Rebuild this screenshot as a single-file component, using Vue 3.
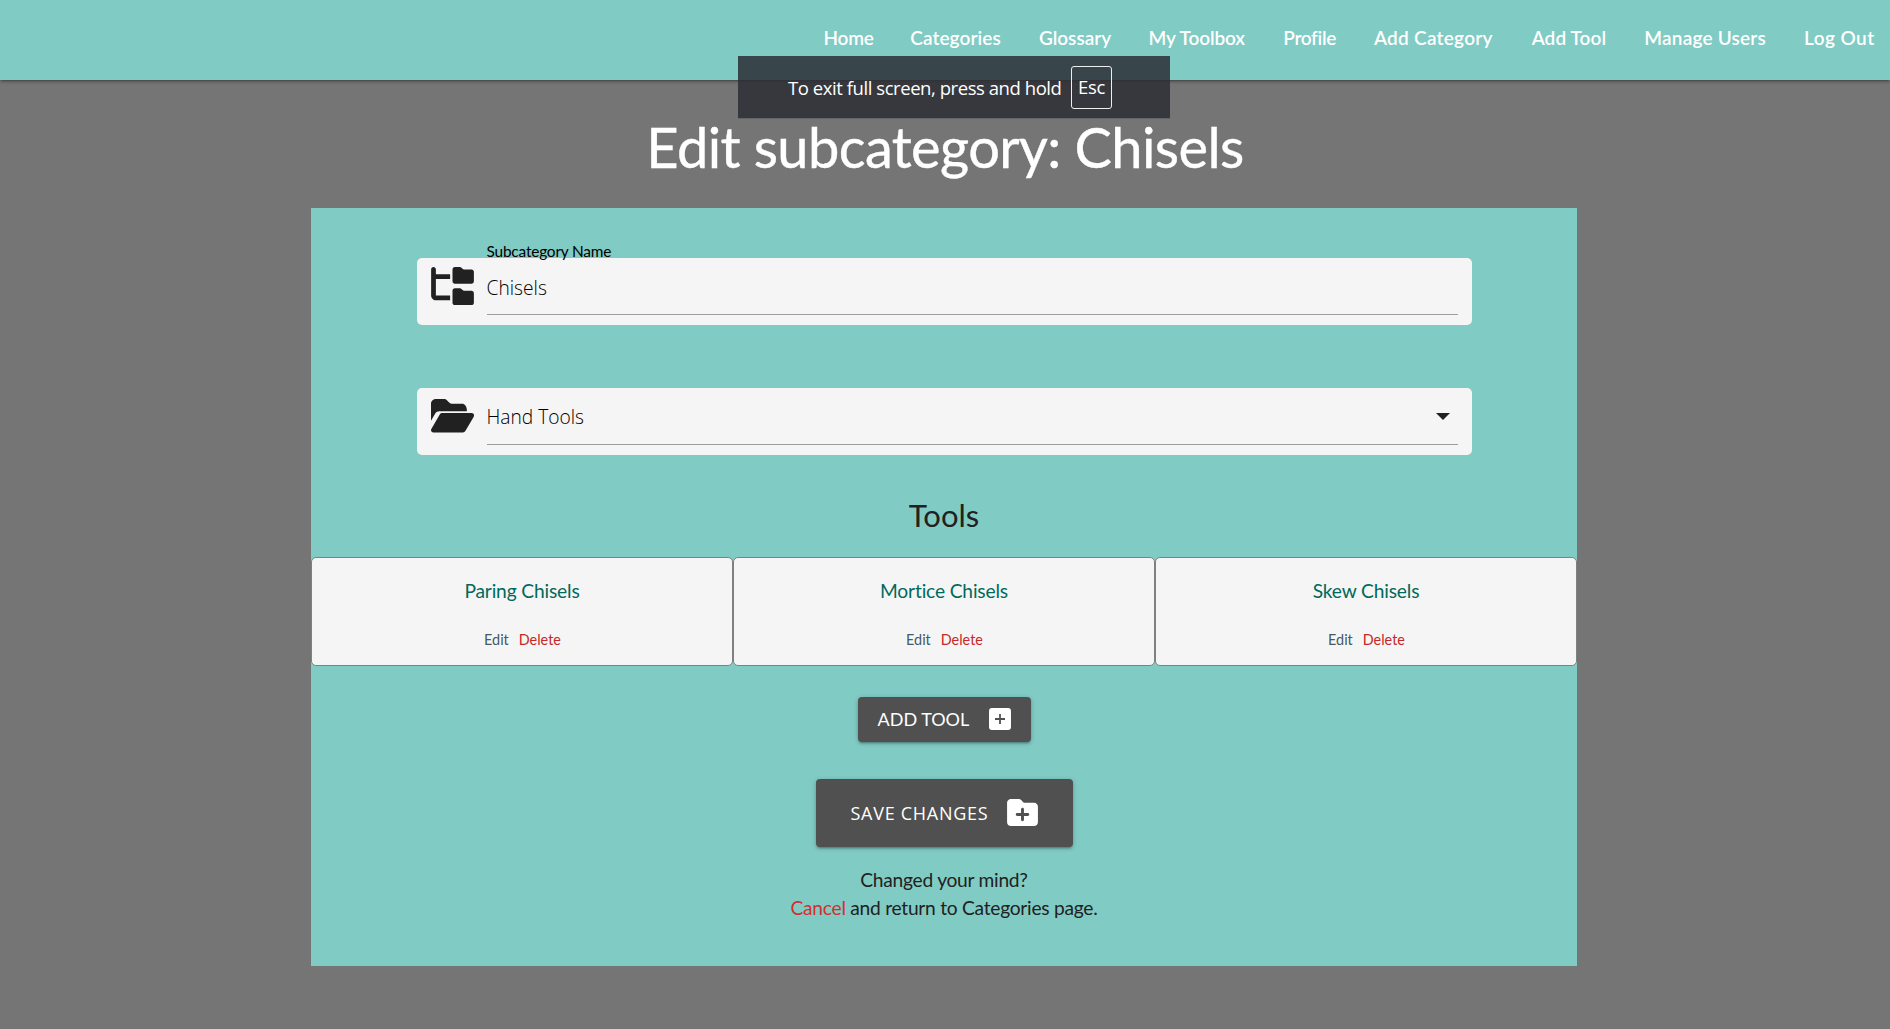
<script setup>
const links = [
  { label: 'Home', width: 49, spacing: -0.2 },
  { label: 'Categories', width: 91, spacing: 0.1 },
  { label: 'Glossary', width: 72, spacing: 0 },
  { label: 'My Toolbox', width: 97, spacing: -0.1 },
  { label: 'Profile', width: 53, spacing: -0.3 },
  { label: 'Add Category', width: 120, spacing: 0.27 },
  { label: 'Add Tool', width: 75, spacing: 0.1 },
  { label: 'Manage Users', width: 122, spacing: 0.2 },
  { label: 'Log Out', width: 72, spacing: 0.45 },
]
const tools = ['Paring Chisels', 'Mortice Chisels', 'Skew Chisels']
</script>

<template>
  <div class="page">
    <nav class="navbar">
      <a v-for="l in links" :key="l.label" :style="{ width: l.width + 'px', letterSpacing: l.spacing + 'px' }">{{ l.label }}</a>
    </nav>
    <div class="fullscreen-hint">
      <span>To exit full screen, press and hold</span>
      <kbd>Esc</kbd>
    </div>
    <h1>Edit subcategory: Chisels</h1>
    <main class="panel">
      <div class="field">
        <svg class="field-icon tree" viewBox="0 0 576 512"><path d="M64 32C64 14.300 49.700 0 32 0S0 14.300 0 32v96V384c0 35.300 28.700 64 64 64H256V384H64V160H256V96H64V32zM288 192c0 17.700 14.300 32 32 32H544c17.700 0 32-14.300 32-32V64c0-17.700-14.300-32-32-32H445.300c-8.500 0-16.600-3.400-22.600-9.400L409.400 9.400c-6-6-14.100-9.400-22.600-9.400H320c-17.700 0-32 14.300-32 32V192zm0 288c0 17.700 14.300 32 32 32H544c17.700 0 32-14.300 32-32V352c0-17.700-14.300-32-32-32H445.300c-8.500 0-16.600-3.400-22.600-9.400l-13.300-13.300c-6-6-14.100-9.400-22.600-9.400H320c-17.700 0-32 14.300-32 32V480z"/></svg>
        <div class="control">
          <label>Subcategory Name</label>
          <span class="value">Chisels</span>
        </div>
      </div>
      <div class="field">
        <svg class="field-icon open" viewBox="0 0 576 448"><path d="M56.600 194.700C68 175 89 163.500 111.800 163.500H480V144c0-44-28-80-64-80H288c-17 0-33.300-6.700-45.300-18.700L216.200 18.700C204.200 6.700 188 0 171 0H64C28.700 0 0 28.700 0 64V292z"/><path d="M572.600 236.100 460 429.100C453.500 441 441 448 428 448H32C7.400 448-8 421.400 4.400 400.100L117 207.100C123.500 195.200 136 188 149 188H545C569.600 188 585 214.800 572.600 236.100z"/></svg>
        <div class="control">
          <span class="value select">Hand Tools</span>
          <svg class="caret" viewBox="0 0 14 7"><path d="M0 0h14L7 7z"/></svg>
        </div>
      </div>
      <h2>Tools</h2>
      <section class="tools">
        <article v-for="t in tools" :key="t">
          <h3>{{ t }}</h3>
          <p><a class="edit">Edit</a><a class="delete">Delete</a></p>
        </article>
      </section>
      <button class="add">
        <span>ADD TOOL</span>
        <svg viewBox="0 0 22 22"><path fill-rule="evenodd" d="M3 0h16a3 3 0 0 1 3 3v16a3 3 0 0 1-3 3H3a3 3 0 0 1-3-3V3a3 3 0 0 1 3-3zM10.100 6v4.100H6v1.800h4.100V16h1.800v-4.100H16v-1.800h-4.100V6z"/></svg>
      </button>
      <button class="save">
        <span>SAVE CHANGES</span>
        <svg viewBox="0 0 512 448"><path fill-rule="evenodd" d="M448 448H64c-35.300 0-64-28.700-64-64V64C0 28.700 28.700 0 64 0h128c20.100 0 39.100 9.500 51.200 25.600l19.200 25.600c6 8.100 15.500 12.800 25.600 12.800H448c35.300 0 64 28.700 64 64V384c0 35.300-28.700 64-64 64zM232 344c0 13.300 10.700 24 24 24s24-10.700 24-24V280h64c13.300 0 24-10.700 24-24s-10.700-24-24-24H280V168c0-13.300-10.700-24-24-24s-24 10.700-24 24v64H168c-13.300 0-24 10.700-24 24s10.700 24 24 24h64v64z"/></svg>
      </button>
      <p class="cancel-note">Changed your mind?<br><a>Cancel</a> and return to Categories page.</p>
    </main>
  </div>
</template>

<style>
body { background: #757575; overflow: hidden; }
</style>

<style scoped>
* { box-sizing: border-box; }
.page {
  width: 1890px;
  height: 1029px;
  overflow: hidden;
  background: #757575;
  color: #212121;
  font-family: Lato, "Liberation Sans", sans-serif;
}
.navbar {
  height: 80px;
  padding: 0 14px 0 0;
  display: flex;
  justify-content: flex-end;
  gap: 37.700px;
  background: #80cbc4;
  box-shadow: 0 2px 2px rgba(0, 0, 0, .14), 0 3px 1px -2px rgba(0, 0, 0, .12), 0 1px 5px rgba(0, 0, 0, .2);
}
.navbar a {
  flex: none;
  white-space: nowrap;
  font-size: 19px;
  line-height: 76px;
  font-weight: 600;
  color: #fff;
}
.fullscreen-hint {
  position: absolute;
  left: 738px;
  top: 56px;
  width: 432px;
  height: 62px;
  padding: 1px 0 0 50px;
  display: flex;
  align-items: center;
  gap: 9px;
  background: rgba(43, 46, 53, .85);
  box-shadow: 0 1px 0 #646567;
  color: #fff;
  font: 18.500px/24px "Open Sans", sans-serif;
  white-space: nowrap;
}
.fullscreen-hint span { width: 274px; letter-spacing: -.44px; }
kbd {
  width: 41px;
  height: 43px;
  border: 1px solid #eee;
  border-radius: 3px;
  font: inherit;
  line-height: 40px;
  letter-spacing: -.3px;
  text-align: center;
}
h1 {
  margin: 0;
  height: 128px;
  font-size: 56px;
  line-height: 134px;
  font-weight: 400;
  letter-spacing: -.6px;
  text-align: center;
  color: #fff;
  -webkit-text-stroke: .4px #fff;
}
.panel {
  width: 1266px;
  height: 758px;
  margin-left: 311px;
  padding-top: 50px;
  display: flex;
  flex-direction: column;
  align-items: center;
  background: #80cbc4;
}
.field {
  flex: none;
  width: 1055px;
  height: 67px;
  margin-bottom: 63px;
  padding: 0 14px;
  display: flex;
  background: #f5f5f5;
  border-radius: 5px;
}
.field-icon { flex: none; width: 43px; fill: #212121; }
.tree { height: 38px; margin-top: 9px; }
.open { height: 33.500px; margin-top: 11px; }
.control {
  position: relative;
  flex: 1;
  height: 57px;
  margin-left: 13px;
  border-bottom: 1px solid #9e9e9e;
  display: flex;
  justify-content: space-between;
}
label {
  position: absolute;
  left: 0;
  top: -17px;
  font-size: 15.400px;
  line-height: 20px;
  letter-spacing: -.18px;
  color: #000;
}
.value {
  font: 350 19.200px/60px "Open Sans", sans-serif;
  color: #000;
}
.select { line-height: 58px; }
.caret { width: 14px; height: 7px; margin: 25px 8px 0 0; fill: #212121; }
h2 {
  margin: -36px 0 0;
  height: 75px;
  font-size: 31px;
  line-height: 66px;
  font-weight: 400;
}
.tools { width: 1266px; display: flex; flex: none; }
article {
  flex: 1;
  height: 109px;
  border: 1px solid #808080;
  border-radius: 5px;
  background: #f5f5f5;
  text-align: center;
}
h3 {
  margin: 19px 0 0;
  font-size: 19.200px;
  line-height: 28px;
  font-weight: 400;
  letter-spacing: -.15px;
  color: #00695c;
}
article p {
  margin: 25px 0 0;
  padding-left: 1px;
  display: flex;
  justify-content: center;
  gap: 10px;
  font-size: 14.400px;
  line-height: 20px;
}
.edit { color: #455a64; }
.delete { color: #c62828; }
button {
  flex: none;
  display: flex;
  align-items: center;
  justify-content: space-between;
  border: 0;
  border-radius: 4px;
  background: #505050;
  color: #fff;
  white-space: nowrap;
  box-shadow: 0 2px 2px rgba(0, 0, 0, .14), 0 3px 1px -2px rgba(0, 0, 0, .12), 0 1px 5px rgba(0, 0, 0, .2);
}
button svg { fill: #fff; margin-top: -1px; }
.add {
  width: 173px;
  height: 45px;
  margin-top: 31px;
  padding: 0 20px;
  font: 18px Lato, sans-serif;
}
.add span { margin-top: -2px; }
.add svg { width: 22px; height: 22px; }
.save {
  width: 257px;
  height: 68px;
  margin-top: 37px;
  padding: 0 35px;
  font: 18px "Open Sans", sans-serif;
  letter-spacing: .72px;
}
.save svg { width: 31px; height: 27px; }
.cancel-note {
  margin: 19px 0 0;
  font-size: 19.200px;
  line-height: 28px;
  letter-spacing: -.26px;
  text-align: center;
}
.cancel-note a { color: #d32f2f; }
</style>
